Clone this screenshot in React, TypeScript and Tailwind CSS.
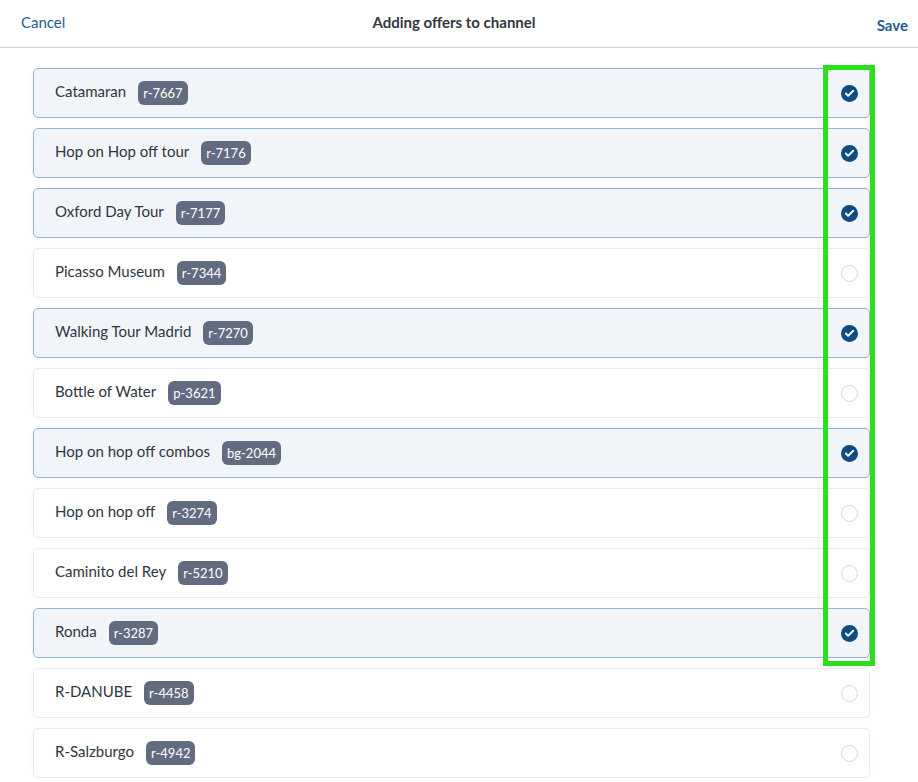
import { Check } from "lucide-react";

type Offer = { name: string; code: string; selected: boolean };

const offers: Offer[] = [
  { name: "Catamaran", code: "r-7667", selected: true },
  { name: "Hop on Hop off tour", code: "r-7176", selected: true },
  { name: "Oxford Day Tour", code: "r-7177", selected: true },
  { name: "Picasso Museum", code: "r-7344", selected: false },
  { name: "Walking Tour Madrid", code: "r-7270", selected: true },
  { name: "Bottle of Water", code: "p-3621", selected: false },
  { name: "Hop on hop off combos", code: "bg-2044", selected: true },
  { name: "Hop on hop off", code: "r-3274", selected: false },
  { name: "Caminito del Rey", code: "r-5210", selected: false },
  { name: "Ronda", code: "r-3287", selected: true },
  { name: "R-DANUBE", code: "r-4458", selected: false },
  { name: "R-Salzburgo", code: "r-4942", selected: false },
];

function OfferRow({ offer }: { offer: Offer }) {
  return (
    <li
      className={
        offer.selected
          ? "flex h-[50px] items-center justify-between rounded-[5px] border border-[#93b4d2] bg-[#f1f5f9] pl-[21px] pr-[11px] shadow-[0_0_6px_rgba(0,0,0,0.03)]"
          : "flex h-[50px] items-center justify-between rounded-[5px] border border-[#e8eaee] bg-white pl-[21px] pr-[11px] shadow-[0_0_6px_rgba(0,0,0,0.03)]"
      }
    >
      <div className="flex items-center">
        <span className="-mt-[3px] text-[15px] text-[#2f3542]">{offer.name}</span>
        <span className="ml-[12px] rounded-[6px] bg-[#636b80] px-[5px] py-[3px] text-[13px] leading-[18px] text-white">
          {offer.code}
        </span>
      </div>
      {offer.selected ? (
        <span className="flex h-[17px] w-[17px] items-center justify-center rounded-full bg-[#0f4c81]">
          <Check className="h-[11px] w-[11px] text-white" strokeWidth={4} />
        </span>
      ) : (
        <span className="h-[17px] w-[17px] rounded-full border border-[#d3d7de] bg-white" />
      )}
    </li>
  );
}

export default function App() {
  return (
    <div className="relative min-h-screen bg-white font-['Lato',sans-serif]">
      <header className="grid h-[48px] grid-cols-[1fr_auto_1fr] items-center border-b border-[#d4d6dc] pl-[21px] pr-[10px]">
        <button className="-mt-[2px] justify-self-start text-[15px] text-[#1f5c8e]">Cancel</button>
        <h1 className="-mt-[2px] mr-[21px] text-[15px] font-bold text-[#333740]">Adding offers to channel</h1>
        <button className="mt-[4px] justify-self-end text-[15px] font-bold text-[#1f5c8e]">Save</button>
      </header>

      <ul className="flex flex-col gap-[10px] pl-[33px] pr-[48px] pt-[20px]">
        {offers.map((offer) => (
          <OfferRow key={offer.code} offer={offer} />
        ))}
      </ul>

      <div className="pointer-events-none absolute left-[823px] top-[65px] h-[601px] w-[52px] border-[5px] border-[#2ae01a]" />
    </div>
  );
}
